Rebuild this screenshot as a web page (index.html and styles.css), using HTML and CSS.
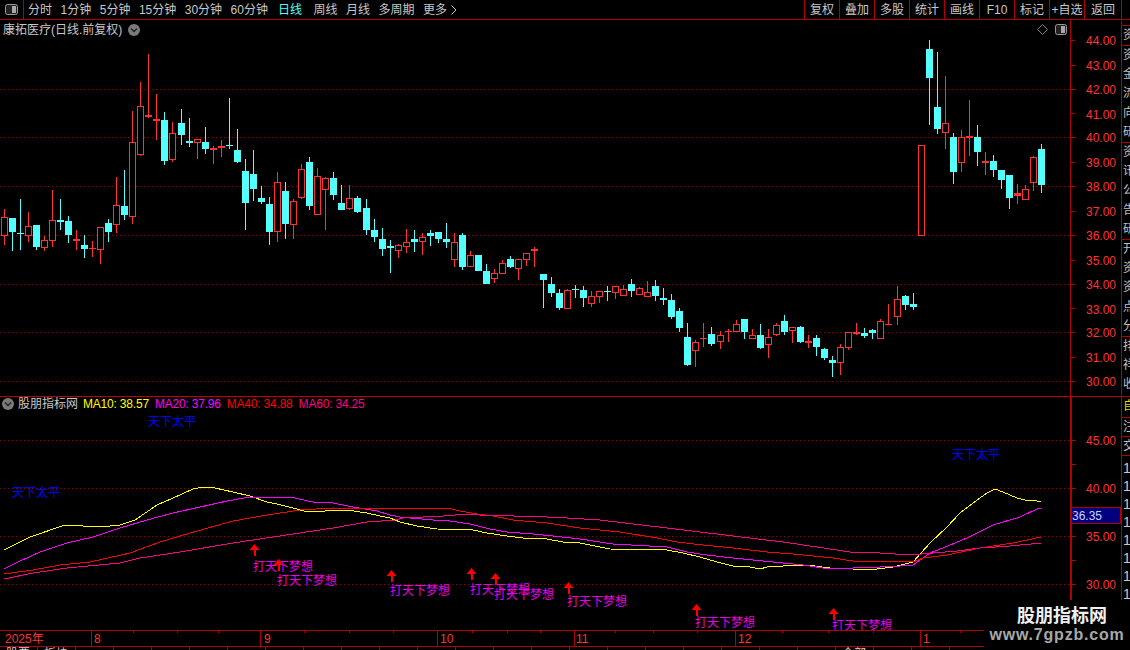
FILE: index.html
```html
<!DOCTYPE html>
<html lang="zh-CN">
<head>
<meta charset="utf-8">
<title>康拓医疗</title>
<link rel="stylesheet" href="styles.css">
</head>
<body>
<div class="app">
  <header class="toolbar">
    <div class="toggle-cell">
      <svg class="toggle" width="13" height="11" viewBox="0 0 13 11"><rect x="0.5" y="0.5" width="12" height="10" rx="2" fill="#222" stroke="#9a9a9a"/><rect x="7" y="2" width="4" height="7" fill="#a8a8a8"/></svg>
    </div>
    <nav class="periods">
      <span>分时</span><span>1分钟</span><span>5分钟</span><span>15分钟</span><span>30分钟</span><span>60分钟</span>
      <span class="active">日线</span><span>周线</span><span>月线</span><span>多周期</span>
      <span class="more">更多<svg width="6" height="10" viewBox="0 0 6 10"><polyline points="0.5,0.5 5,5 0.5,9.5" fill="none" stroke="#c8c8c8"/></svg></span>
    </nav>
    <div class="actions">
      <span>复权</span><span>叠加</span><span>多股</span><span>统计</span><span>画线</span><span>F10</span><span>标记</span><span>+自选</span><span>返回</span>
    </div>
  </header>
  <div class="workspace">
    <main class="charts">
      <section class="pane price">
        <div class="plot-wrap">
          <svg id="pricePlot" class="plot" width="1070" height="376" viewBox="0 20 1070 376"></svg>
          <div class="pane-title">
            <span>康拓医疗(日线.前复权)</span>
            <svg width="12" height="12" viewBox="0 0 12 12"><circle cx="6" cy="6" r="6" fill="#7a7a7a"/><polyline points="3,4.5 6,7.5 9,4.5" fill="none" stroke="#222" stroke-width="1.4"/></svg>
          </div>
          <div class="pane-tools">
            <svg width="11" height="11" viewBox="0 0 11 11"><polygon points="5.5,0.5 10.5,5.5 5.5,10.5 0.5,5.5" fill="none" stroke="#808080"/></svg>
            <svg width="12" height="11" viewBox="0 0 12 11"><rect x="0.5" y="0.5" width="11" height="10" rx="2" fill="#222" stroke="#9a9a9a"/><rect x="6" y="2" width="4" height="7" fill="#a8a8a8"/></svg>
          </div>
        </div>
        <svg id="priceAxis" class="axis" width="50" height="376" viewBox="1071 20 50 376">
          <text x="1086" y="45">44.00</text><text x="1086" y="70">43.00</text><text x="1086" y="94">42.00</text>
          <text x="1086" y="119">41.00</text><text x="1086" y="142">40.00</text><text x="1086" y="167">39.00</text>
          <text x="1086" y="191">38.00</text><text x="1086" y="216">37.00</text><text x="1086" y="240">36.00</text>
          <text x="1086" y="265">35.00</text><text x="1086" y="289">34.00</text><text x="1086" y="314">33.00</text>
          <text x="1086" y="337">32.00</text><text x="1086" y="362">31.00</text><text x="1086" y="386">30.00</text>
        </svg>
      </section>
      <section class="pane indicator">
        <div class="plot-wrap">
          <svg id="indPlot" class="plot" width="1070" height="233" viewBox="0 397 1070 233">
            <g class="note-blue">
              <text x="148" y="426">天下太平</text><text x="12" y="497">天下太平</text><text x="952" y="459">天下太平</text>
            </g>
            <g class="note-pink">
              <text x="253" y="571">打天下梦想</text><text x="277" y="585">打天下梦想</text><text x="390" y="595">打天下梦想</text>
              <text x="470" y="594">打天下梦想</text><text x="494" y="599">打天下梦想</text><text x="567" y="606">打天下梦想</text>
              <text x="695" y="627">打天下梦想</text><text x="832" y="630">打天下梦想</text>
            </g>
          </svg>
          <div class="legend">
            <svg width="12" height="12" viewBox="0 0 12 12"><circle cx="6" cy="6" r="6" fill="#7a7a7a"/><polyline points="3,4.5 6,7.5 9,4.5" fill="none" stroke="#222" stroke-width="1.4"/></svg>
            <span class="legend-name">股朋指标网</span>
            <span class="ma ma10">MA10: 38.57</span><span class="ma ma20">MA20: 37.96</span><span class="ma ma40">MA40: 34.88</span><span class="ma ma60">MA60: 34.25</span>
          </div>
        </div>
        <svg id="indAxis" class="axis thick" width="49" height="233" viewBox="1072 397 49 233">
          <text x="1086" y="445">45.00</text><text x="1086" y="493">40.00</text><text x="1086" y="541">35.00</text><text x="1086" y="589">30.00</text>
          <rect class="cursor-box" x="1071.5" y="507.5" width="49" height="16"/>
          <text class="cursor-val" x="1072" y="520">36.35</text>
        </svg>
      </section>
      <section class="time-axis">
        <svg id="timeAxis" width="1121" height="16" viewBox="0 630 1121 16">
          <text x="5" y="643">2025年</text><text x="94" y="643">8</text><text x="264" y="643">9</text><text x="440" y="643">10</text><text x="576" y="643">11</text><text x="738" y="643">12</text><text x="923" y="643">1</text>
        </svg>
      </section>
      <footer class="tabs">
        <span>股票</span><span>板块</span><span></span><span></span><span></span><span></span><span></span><span></span><span></span><span></span><span></span><span></span><span></span><span></span><span></span><span></span><span></span><span></span><span></span><span></span><span></span><span></span><span>全部</span><span></span><span></span><span></span>
      </footer>
    </main>
    <aside class="sidebar">
      <div class="side-sec s0"></div>
      <div class="side-sec s1">资</div>
      <div class="side-sec s2">资金流向研</div>
      <div class="side-sec s2">资讯公告研</div>
      <div class="side-sec s2">开资资点分</div>
      <div class="side-sec s3">排祥收</div>
      <div class="side-sec s4 gold">自</div>
      <div class="side-sec s5">注</div>
      <div class="side-sec s5">交</div>
      <div class="side-nums">1<br>1<br>1<br>1<br>1<br>1<br>1<br>1</div>
    </aside>
  </div>
  <div class="watermark">
    <div class="wm-title">股朋指标网</div>
    <div class="wm-url">www.7gpzb.com</div>
  </div>
</div>
<script src="chart.js"></script>
</body>
</html>
```

FILE: styles.css
```css
* { box-sizing: border-box; }
html, body { margin: 0; padding: 0; background: #000; }
body { width: 1130px; height: 650px; overflow: hidden; font: 12px/1 "Liberation Sans", "Noto Sans CJK SC", sans-serif; color: #c8c8c8; }
.app { position: relative; width: 1130px; height: 650px; display: flex; flex-direction: column; }

.toolbar { display: flex; align-items: stretch; height: 20px; border-bottom: 1px solid #b00000; flex: none; }
.toggle-cell { width: 24px; border-right: 1px solid #b00000; display: flex; align-items: center; justify-content: center; }
.toggle { display: block; margin-right: 1px; }
.periods { display: flex; align-items: center; gap: 8.5px; margin-left: 4px; }
.periods .active { color: #54ffff; margin: 0 3px 0 1.5px; }
.more { display: flex; align-items: center; gap: 4px; }
.actions { display: flex; margin-left: auto; margin-right: 8px; }
.actions span { width: 35px; border-left: 1px solid #b00000; display: flex; align-items: center; justify-content: center; }
.actions span:last-child { width: 38px; border-right: 1px solid #b00000; }

.workspace { display: flex; flex: 1; min-height: 0; }
.charts { width: 1121px; display: flex; flex-direction: column; flex: none; }
.pane { display: flex; flex: none; }
.price { height: 377px; border-bottom: 1px solid #c00000; }
.indicator { height: 233px; }
.plot-wrap { position: relative; width: 1070px; flex: none; overflow: hidden; }
.plot { display: block; }
.axis { display: block; border-left: 1px solid #b00000; box-sizing: content-box; flex: none; }
.axis.thick { border-left-width: 2px; }
.axis text { fill: #ff3232; font-size: 12px; }
.cursor-box { fill: #000080; stroke: #b00000; }
.axis text.cursor-val { fill: #c8d4ff; }

.pane-title { position: absolute; left: 3px; top: 4px; display: flex; align-items: center; gap: 6px; }
.pane-tools { position: absolute; right: 3px; top: 4px; display: flex; align-items: center; gap: 7px; }
.pane-tools svg, .pane-title svg, .legend svg { display: block; }
.legend { position: absolute; left: 2px; top: 1px; display: flex; align-items: center; height: 12px; white-space: nowrap; }
.legend-name { margin: 0 5px 0 4px; }
.ma { margin-right: 6px; letter-spacing: -0.2px; }
.ma10 { color: #ffff00; }
.ma20 { color: #ff00ff; }
.ma40 { color: #ff0000; }
.ma60 { color: #ff0080; }

.note-blue text { fill: #0000ff; font-size: 12px; }
.note-pink text { fill: #e800e8; font-size: 12px; }

.time-axis { height: 17px; border-top: 1px solid #b00000; border-bottom: 1px solid #b00000; flex: none; overflow: hidden; }
.time-axis svg { display: block; margin-top: -1px; }
.time-axis text { fill: #ff3232; font-size: 12px; }

.tabs { display: flex; height: 4px; overflow: hidden; flex: none; }
.tabs span { width: 38px; flex: none; border-right: 1px solid #b00000; padding: 1px 0 0 6px; color: #d0d0d0; }

.sidebar { width: 9px; flex: none; border-left: 1px solid #b00000; overflow: hidden; display: flex; flex-direction: column; }
.side-sec { overflow: hidden; width: 13px; padding-left: 1px; border-bottom: 1px solid #b00000; line-height: 19.2px; flex: none; color: #c0c0c0; }
.s0 { height: 6px; }
.s1 { height: 20px; }
.s2 { height: 97px; }
.s3 { height: 60px; }
.s4 { height: 21px; }
.s5 { height: 19px; }
.gold { color: #d8d800; }
.side-nums { padding: 3px 0 0 1px; line-height: 18px; color: #c8c8c8; font-size: 14px; }

.watermark { position: absolute; left: 984px; top: 600px; width: 146px; height: 50px; background: #000; text-align: center; padding-top: 4px; }
.wm-title { font: bold 18px/20px "Noto Sans CJK SC", sans-serif; color: #f0f0f0; padding-left: 10px; }
.wm-url { font: bold 16px/18px "Liberation Sans", sans-serif; color: #a8a8a8; letter-spacing: .8px; margin-top: 2px; white-space: nowrap; }
```

FILE: chart.js
```js
var NS = "http://www.w3.org/2000/svg";
var RED = "#ff3232", CYAN = "#54ffff", LINE = "#b00000", GRID = "#8c0000";

function el(parent, name, attrs, before) {
  var n = document.createElementNS(NS, name);
  for (var k in attrs) n.setAttribute(k, attrs[k]);
  if (before) parent.insertBefore(n, parent.firstChild); else parent.appendChild(n);
  return n;
}
function box(g, x, y, w, h, fill) {
  el(g, "rect", { x: x, y: y, width: w, height: h, fill: fill, "shape-rendering": "crispEdges" });
}
function dots(g, y) {
  el(g, "line", { x1: 0, x2: 1070, y1: y + 0.5, y2: y + 0.5, stroke: GRID, "stroke-dasharray": "1 3" });
}

// [isRed, bodyTop, bodyBottom, high, low], one entry per trading day
var candles = [
[1,217,236,209,245],[0,218,232,218,251],[0,233,234,199,250],[1,226,236,212,242],[0,225,247,225,250],
[1,240,248,236,251],[1,220,241,190,247],[0,220,222,199,230],[0,221,235,216,243],[1,239,241,230,250],
[0,245,249,235,258],[1,248,249,241,257],[1,227,250,227,264],[0,223,232,219,242],[1,205,225,177,233],
[0,206,215,170,220],[1,142,217,111,224],[1,106,155,82,156],[1,115,117,54,118],[1,119,121,94,140],
[0,120,161,112,165],[1,133,160,122,162],[0,123,135,109,145],[0,141,143,118,147],[1,139,143,139,159],
[0,142,149,127,154],[1,148,150,146,164],[1,146,148,140,157],[0,145,146,98,149],[0,150,162,129,163],
[0,171,203,159,230],[0,174,189,150,201],[0,198,202,186,204],[0,204,232,197,245],[1,182,232,172,242],
[0,191,224,182,239],[1,201,225,199,239],[1,169,198,164,199],[0,162,206,157,210],[1,176,215,168,215],
[1,178,190,177,230],[0,178,195,172,200],[0,203,210,185,210],[1,198,209,185,210],[0,198,212,196,213],
[0,208,230,199,235],[0,230,237,219,242],[0,239,249,228,256],[0,246,248,240,273],[1,245,251,244,258],
[1,242,247,229,253],[0,239,242,230,252],[1,237,242,233,255],[0,233,236,230,246],[0,232,239,232,243],
[0,239,242,223,248],[1,242,260,233,267],[0,235,267,233,270],[1,255,267,251,267],[0,255,271,255,271],
[0,271,284,264,284],[1,273,279,269,283],[1,263,274,260,274],[0,259,267,256,268],[1,259,269,259,280],
[1,253,260,253,266],[1,249,251,247,267],[0,274,280,274,308],[0,284,293,277,297],[0,293,308,289,310],
[1,290,309,289,309],[0,289,290,285,298],[0,290,298,286,307],[1,296,304,291,307],[1,291,297,291,303],
[0,291,292,286,301],[1,286,293,286,299],[1,289,296,285,296],[0,284,291,279,297],[1,288,295,287,295],
[1,292,297,281,297],[0,286,296,280,301],[0,298,300,288,305],[0,300,317,294,319],[0,311,328,308,332],
[0,337,365,323,366],[1,342,351,340,367],[1,338,339,323,347],[0,334,344,327,346],[1,335,342,331,349],
[1,331,332,329,342],[1,324,332,320,332],[0,319,332,319,339],[1,335,339,329,339],[0,335,348,324,349],
[1,337,345,329,358],[1,325,335,323,336],[0,321,332,315,335],[1,327,331,327,343],[0,327,342,326,343],
[1,341,343,335,348],[0,338,347,335,356],[0,349,358,348,360],[0,360,363,356,377],[1,347,363,344,375],
[1,332,348,332,350],[1,332,334,323,335],[0,333,336,328,338],[0,330,333,329,339],[1,321,339,319,339],
[1,324,325,304,325],[1,299,317,286,325],[0,296,305,295,310],[0,304,307,293,310],[1,145,236,145,236],
[0,49,78,40,125],[0,107,129,52,134],[1,123,133,76,149],[0,137,172,133,184],[1,137,163,130,172],
[1,136,138,100,156],[0,137,152,125,166],[1,161,163,152,175],[0,161,170,155,177],[0,170,180,170,189],
[0,175,198,175,209],[1,193,196,184,204],[1,189,200,185,200],[1,157,183,156,191],[0,149,185,144,193]
];
// Candle spacing is 8px with one extra pixel at these indexes
var wide = [22, 45, 67, 89, 111];
function colOf(i) {
  var x = 4 + 8 * i;
  wide.forEach(function (w) { if (i >= w) x += 1; });
  return x;
}

var price = document.getElementById("pricePlot");
[89, 137, 186, 235, 284, 332, 381].forEach(function (y) { dots(price, y); });
candles.forEach(function (c, i) {
  var x = colOf(i), color = c[0] ? RED : CYAN, h = c[2] - c[1];
  box(price, x, c[3], 1, c[4] - c[3], color);
  if (c[0] && h > 3) {
    el(price, "rect", { x: x - 2.5, y: c[1] + 0.5, width: 6, height: h - 1, fill: "#000", stroke: RED, "shape-rendering": "crispEdges" });
  } else {
    box(price, x - 3, c[1], 7, Math.max(h, 1), color);
  }
});

var ind = document.getElementById("indPlot");
var series = [
["#ffff00","4,550 30,537 65,525 75,525.5 100,527 120,525 135,520 157,505 173,498 193,489 203,487 215,488 233,492 250,496 267,502 277,504 293,508 308,512 325,511 347,510 367,513 380,516 390,518 400,522 417,526 437,529 473,530 487,533 507,536 523,538 547,539 563,542 580,543 610,549 667,550 683,553 700,557 717,562 733,566 750,567 760,569 767,567 783,566 807,565 830,568 853,569 877,569 893,567 913,562 930,543 947,527 960,513 977,500 987,493 995,489 1003,492 1017,498 1025,500 1037,501 1041,502"],
["#ff00ff","4,569 20,561 40,552 67,543 93,537 120,528 147,520 173,513 200,507 227,501 250,497 273,497 290,497 313,502 333,503 353,507 377,511 390,515 400,517 410,518 433,520 450,521 470,524 490,529 507,532 533,534 553,536 580,539 613,544 667,547 687,552 707,555 733,558 753,560 783,563 803,565 830,569 853,568 880,567 900,566 913,565 930,553 943,548 967,538 993,525 1020,517 1037,509 1041,508"],
["#ff0000","4,574 33,570 60,565 90,562 130,553 160,542 190,533 233,521 267,515 300,510 333,508 380,508.5 450,508.5 460,511 477,514 493,516 513,520 547,523 580,528 620,532 657,538 677,542 703,545 733,548 767,552 793,554 833,558 853,561 880,561 913,562 923,558 947,555 980,548 1013,543 1041,537"],
["#ff0080","4,579 33,573 67,568 120,563 140,558 180,552 233,543 273,537 333,528 367,522 395,520 403,518 423,517 443,516 467,514 480,515 547,517 567,518 600,520 633,524 667,528 700,532 733,536 783,542 817,547 850,552 880,553 910,555 933,553 957,551 980,548 1010,546 1041,543"]
];
var under = el(ind, "g", {}, true);
[440, 488, 536, 584].forEach(function (y) { dots(under, y); });
series.forEach(function (s) {
  el(under, "polyline", { points: s[1], fill: "none", stroke: s[0], "shape-rendering": "crispEdges" });
});
[[254,544],[278,559],[391,570],[471,568],[495,573],[568,582],[696,604],[833,608]].forEach(function (a) {
  var x = a[0] + 0.5, y = a[1];
  el(ind, "polygon", { points: x + "," + y + " " + (x + 5) + "," + (y + 6) + " " + (x - 5) + "," + (y + 6), fill: "#ff0000" });
  box(ind, a[0] - 0.5, y + 5, 2, 7, "#ff0000");
});

var pAxis = document.getElementById("priceAxis");
[40,65,89,113,137,162,186,211,235,260,284,308,332,357,381].forEach(function (y) { box(pAxis, 1071, y, 4, 1, LINE); });
var iAxis = document.getElementById("indAxis");
[440,464,488,512,536,560,584].forEach(function (y) { box(iAxis, 1072, y, 4, 1, LINE); });

var tAxis = document.getElementById("timeAxis");
[91,260,437,574,735,920].forEach(function (x) { box(tAxis, x, 630, 1, 16, LINE); });
[133,177,218,304,349,393,472,507,540,615,653,697,782,828,873,960,1000,1040,1080].forEach(function (x) { box(tAxis, x, 630, 1, 3, LINE); });
```
